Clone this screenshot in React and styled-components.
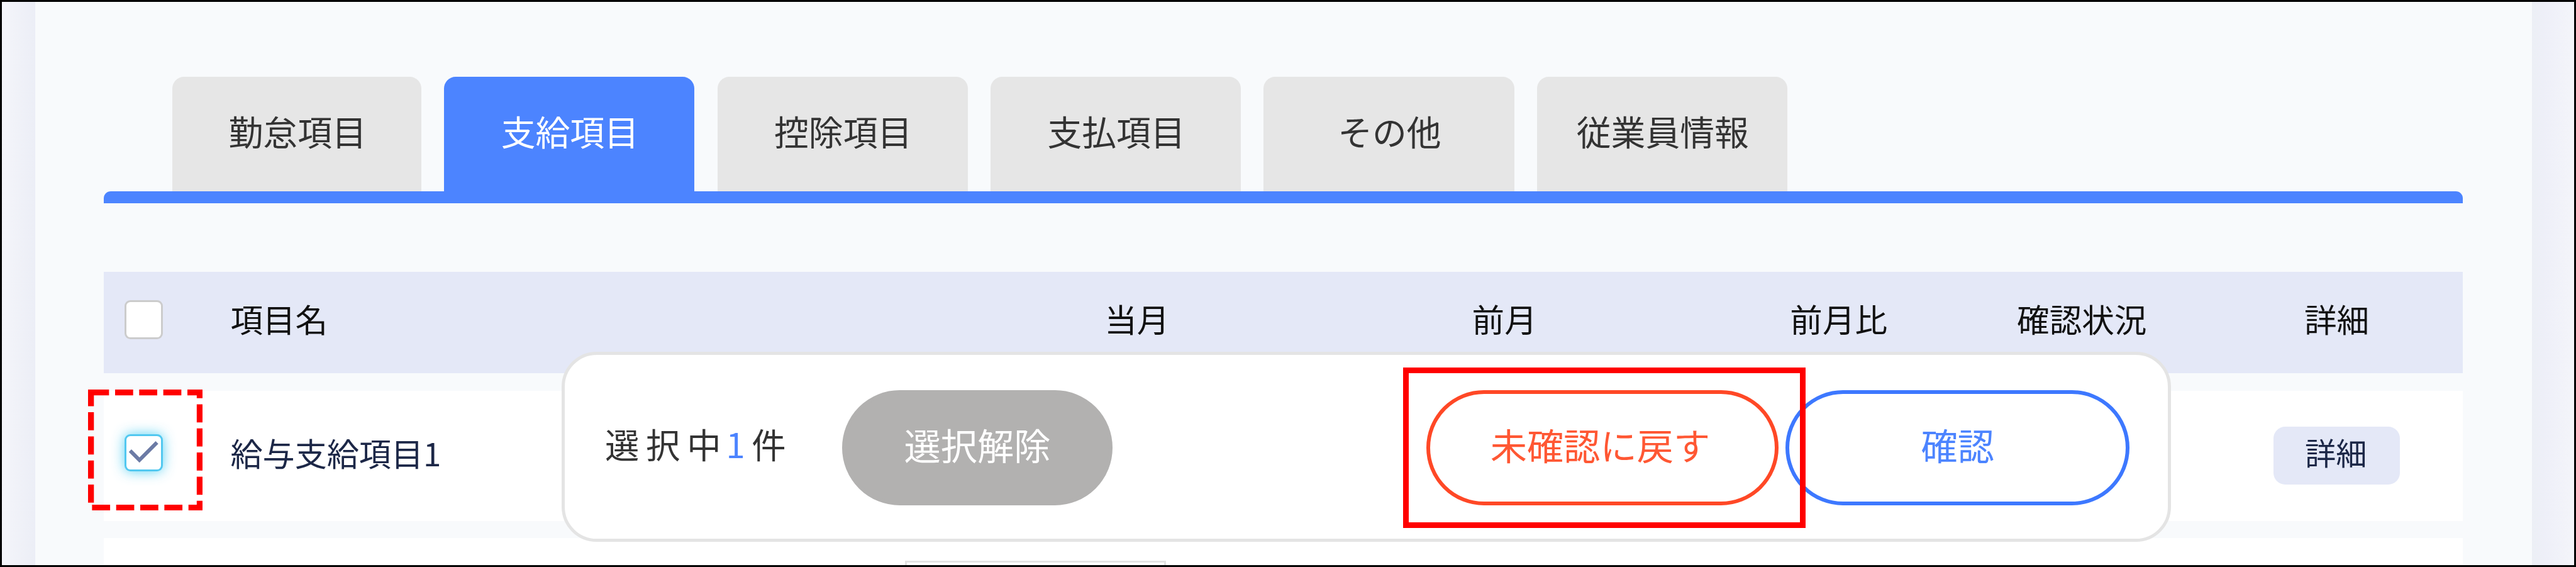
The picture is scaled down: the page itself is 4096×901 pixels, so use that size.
import React, { useState } from 'react';
import styled, { createGlobalStyle } from 'styled-components';

// 1rem = 10 design units
const GlobalStyle = createGlobalStyle`
  html {
    font-size: 9.2922px;
  }
  *, *::before, *::after {
    box-sizing: border-box;
  }
  body {
    margin: 0;
    overflow: hidden;
    font-family: "Noto Sans CJK JP", "Noto Sans", sans-serif;
  }
  button {
    font-family: inherit;
    cursor: pointer;
  }
`;

const Frame = styled.div`
  position: relative;
  width: 100vw;
  height: 100vh;
  border: 3px solid #000;
  display: flex;
  overflow: hidden;
  background: linear-gradient(to right, #f4f5fa 0, #eceef6 5.6rem, #eceff5 calc(100% - 7.2rem), #eeeff8 calc(100% - 5rem), #f4f5fa 100%);
`;

const Panel = styled.main`
  flex: 1;
  margin: 0 7.2rem 0 5.67rem;
  padding: 12.8rem 11.8rem 0 11.75rem;
  background: #f8fafc;
`;

const TabList = styled.div`
  display: flex;
  gap: 3.9rem;
  height: 19.64rem;
  padding-left: 11.8rem;
`;

const Tab = styled.button`
  width: 42.85rem;
  padding: 0 0 1.3rem 0.2rem;
  border: none;
  border-radius: 2rem 2rem 0 0;
  background: ${({ $active }) => ($active ? '#4c84ff' : '#e6e6e6')};
  color: ${({ $active }) => ($active ? '#fff' : '#333')};
  font-size: 5.9rem;
  line-height: 1;
  white-space: nowrap;
  &:first-child {
    width: 42.57rem;
  }
`;

const TabBar = styled.div`
  height: 1.96rem;
  margin-bottom: 11.77rem;
  border-radius: 1.2rem 1.2rem 0 0;
  background: #4c84ff;
`;

const Row = styled.div`
  display: grid;
  grid-template-columns: 21.7rem 129.8rem 50.6rem 75.2rem 39.2rem 44rem 1fr;
  align-items: center;
  height: 22.3rem;
  margin-bottom: 2.93rem;
  background: #fff;
`;

const HeaderRow = styled(Row)`
  height: 17.37rem;
  background: #e4e8f7;
`;

const Cell = styled.div`
  display: flex;
  justify-content: ${({ $align }) => $align || 'center'};
  padding-bottom: 0.9rem;
  color: #1c2747;
  font-size: 5.5rem;
  line-height: 1;
  white-space: nowrap;
`;

const HeadCell = styled(Cell)`
  padding-bottom: 1.4rem;
  color: #111;
  font-size: 5.55rem;
`;

const ButtonCell = styled.div`
  display: flex;
  justify-content: center;
`;

const CheckCell = styled.div`
  display: flex;
  padding: 0 0 1rem 3.6rem;
`;

const Checkbox = styled.button`
  display: flex;
  align-items: center;
  justify-content: center;
  width: 6.5rem;
  height: ${({ $checked }) => ($checked ? '6.3rem' : '6.6rem')};
  padding: 0;
  border: 3px solid ${({ $checked }) => ($checked ? '#52c8f0' : '#ccc')};
  border-radius: 1rem;
  background: #fff;
  box-shadow: ${({ $checked }) => ($checked ? '0 0 2.2rem rgba(60, 200, 240, 0.85)' : 'none')};
`;

const Tick = styled.svg`
  flex-shrink: 0;
  width: 5rem;
  height: 4.4rem;
  fill: none;
  stroke: #6c7ba5;
  stroke-width: 6.5;
`;

const DetailButton = styled.button`
  width: 21.6rem;
  height: 9.9rem;
  padding: 0 0.3rem 1.5rem 0;
  border: none;
  border-radius: 2rem;
  background: #e4e8f7;
  color: #1c2747;
  font-size: 5.3rem;
  line-height: 1;
`;

const ActionBar = styled.div`
  position: absolute;
  left: calc(96.1rem - 3px);
  top: calc(60.2rem - 3px);
  display: flex;
  align-items: center;
  width: 275.4rem;
  height: 32.5rem;
  padding: 0.2rem 6.5rem 0 6.9rem;
  border: 5px solid #e4e4e4;
  border-radius: 6rem;
  background: #fff;
`;

const Selected = styled.div`
  width: 40.6rem;
  padding-bottom: 1.4rem;
  color: #333;
  font-size: 5.85rem;
  line-height: 1;
  letter-spacing: 1.15rem;
  white-space: nowrap;
`;

const Count = styled.span`
  margin-left: -0.3rem;
  color: #4c84ff;
  letter-spacing: 1.15rem;
`;

const PillButton = styled.button`
  width: ${({ $width }) => $width};
  height: 19.7rem;
  margin-left: ${({ $gap }) => $gap || 0};
  padding: 0 0 1.2rem;
  border: 0.7rem solid ${({ $border }) => $border};
  border-radius: 9.85rem;
  background: ${({ $fill }) => $fill || '#fff'};
  color: ${({ $color }) => $color};
  font-size: 6.27rem;
  line-height: 1;
  white-space: nowrap;
`;

const RevertButton = styled(PillButton)`
  padding-right: 0.7rem;
`;

const NextField = styled.div`
  position: absolute;
  left: calc(154.9rem - 3px);
  top: calc(95.9rem - 3px);
  width: 44.6rem;
  height: 4rem;
  border: 3px solid #e3e3e3;
`;

const Highlight = styled.div`
  position: absolute;
  left: calc(240.1rem - 3px);
  top: calc(62.9rem - 3px);
  width: 68.9rem;
  height: 27.4rem;
  border: 1rem solid #f00;
`;

const DashedHighlight = styled.svg`
  position: absolute;
  left: calc(15.1rem - 3px);
  top: calc(66.6rem - 3px);
  width: 19.6rem;
  height: 20.7rem;
  fill: none;
  stroke: #f00;
  stroke-width: 10;
  stroke-dasharray: 30.9 10.35;
`;

const tabs = ['勤怠項目', '支給項目', '控除項目', '支払項目', 'その他', '従業員情報'];
const columns = ['当月', '前月', '前月比', '確認状況', '詳細'];

const App = () => {
  const [activeTab, setActiveTab] = useState('支給項目');
  const [checked, setChecked] = useState(true);

  return (
    <>
      <GlobalStyle />
      <Frame>
        <Panel>
          <TabList>
            {tabs.map(tab => (
              <Tab key={tab} $active={tab === activeTab} onClick={() => setActiveTab(tab)}>
                {tab}
              </Tab>
            ))}
          </TabList>
          <TabBar />
          <HeaderRow>
            <CheckCell>
              <Checkbox />
            </CheckCell>
            <HeadCell $align="flex-start">項目名</HeadCell>
            {columns.map(column => (
              <HeadCell key={column}>{column}</HeadCell>
            ))}
          </HeaderRow>
          <Row>
            <CheckCell>
              <Checkbox $checked={checked} onClick={() => setChecked(!checked)}>
                {checked && (
                  <Tick viewBox="0 0 50 44">
                    <path d="M2 18.5 L18 34.5 L48 4.5" />
                  </Tick>
                )}
              </Checkbox>
            </CheckCell>
            <Cell $align="flex-start">給与支給項目1</Cell>
            <Cell />
            <Cell />
            <Cell />
            <Cell />
            <ButtonCell>
              <DetailButton>詳細</DetailButton>
            </ButtonCell>
          </Row>
          <Row />
        </Panel>
        <NextField />
        <ActionBar>
          <Selected>
            選択中<Count>1</Count>件
          </Selected>
          <PillButton $width="46.2rem" $border="#b2b1b0" $fill="#b2b1b0" $color="#fff">選択解除</PillButton>
          <RevertButton $width="60.3rem" $gap="53.7rem" $border="#ff4826" $color="#ff5733">未確認に戻す</RevertButton>
          <PillButton $width="58.9rem" $gap="1.2rem" $border="#3d78ff" $color="#4c84ff">確認</PillButton>
        </ActionBar>
        <Highlight />
        <DashedHighlight viewBox="0 0 196 207">
          <path d="M5 5 H191 V202 H5 Z" />
        </DashedHighlight>
      </Frame>
    </>
  );
};

export default App;
